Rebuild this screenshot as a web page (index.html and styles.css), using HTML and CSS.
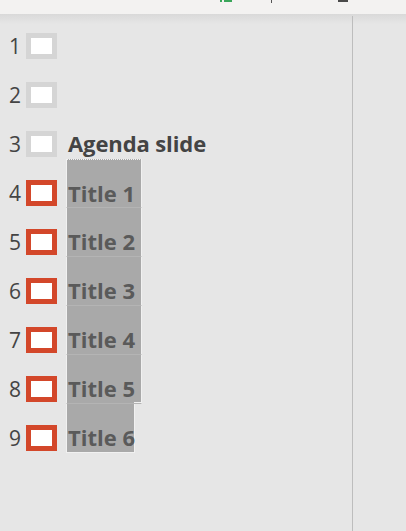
FILE: index.html
```html
<!DOCTYPE html>
<html lang="en">
<head>
    <meta charset="UTF-8">
    <meta name="viewport" content="width=device-width, initial-scale=1.0">
    <title>Slides</title>
    <link rel="stylesheet" href="styles.css">
</head>
<body>
    <div class="ribbon">
        <span class="tick green-a"></span>
        <span class="tick green-b"></span>
        <span class="tick dark-a"></span>
        <span class="tick dark-b"></span>
    </div>
    <div class="workspace">
        <div class="outline">
            <div class="row">
                <span class="num">1</span>
                <span class="thumb"></span>
            </div>
            <div class="row">
                <span class="num">2</span>
                <span class="thumb"></span>
            </div>
            <div class="row">
                <span class="num">3</span>
                <span class="thumb"></span>
                <span class="heading">Agenda slide</span>
            </div>
            <div class="row">
                <span class="num">4</span>
                <span class="thumb hidden"></span>
                <span class="title first">Title 1</span>
            </div>
            <div class="row">
                <span class="num">5</span>
                <span class="thumb hidden"></span>
                <span class="title">Title 2</span>
            </div>
            <div class="row">
                <span class="num">6</span>
                <span class="thumb hidden"></span>
                <span class="title">Title 3</span>
            </div>
            <div class="row">
                <span class="num">7</span>
                <span class="thumb hidden"></span>
                <span class="title">Title 4</span>
            </div>
            <div class="row">
                <span class="num">8</span>
                <span class="thumb hidden"></span>
                <span class="title step">Title 5</span>
            </div>
            <div class="row">
                <span class="num">9</span>
                <span class="thumb hidden"></span>
                <span class="title last">Title 6</span>
            </div>
        </div>
        <div class="notes"></div>
    </div>
</body>
</html>
```

FILE: styles.css
```css
body {
    margin: 0;
    background-color: #e6e6e6;
    color: #444444;
    font-family: "Open Sans", "Noto Sans", sans-serif;
    overflow: hidden;
}

.ribbon {
    height: 14px;
    background-color: #f3f2f1;
    display: flex;
    align-items: flex-start;
}

.tick {
    display: block;
    height: 2px;
}

.green-a { width: 2px; margin-left: 220px; background-color: #3aa65a; }
.green-b { width: 8px; margin-left: 2px; background-color: #3aa65a; }
.dark-a { width: 1px; height: 3px; margin-left: 39px; background-color: #555555; }
.dark-b { width: 10px; margin-left: 66px; background-color: #4a4a4a; }

.workspace {
    display: flex;
    height: 517px;
    background-image: linear-gradient(#d9d9d9, #e6e6e6);
    background-size: 100% 10px;
    background-repeat: no-repeat;
}

.outline {
    width: 353px;
    margin-top: 2px;
    padding-top: 10px;
    border-right: 1px solid #bdbdbd;
    box-sizing: border-box;
}

.notes {
    flex: 1;
}

.row {
    display: flex;
    align-items: flex-start;
    height: 49px;
}

.num {
    width: 21px;
    margin-top: 5px;
    text-align: right;
    font-size: 21px;
    line-height: 30px;
}

.thumb {
    width: 31px;
    height: 26px;
    margin-left: 5px;
    margin-top: 7px;
    border: 5px solid #d5d5d5;
    box-sizing: border-box;
    background-color: #ffffff;
}

.thumb.hidden {
    border-color: #d3472a;
}

.heading {
    margin-left: 11px;
    margin-top: 4px;
    font-size: 22px;
    font-weight: bold;
    line-height: 30px;
    letter-spacing: -0.1px;
}

.title {
    width: 76px;
    height: 49px;
    margin-left: 9px;
    margin-top: -14px;
    padding: 18px 0 0 1px;
    box-sizing: border-box;
    background-color: #a9a9a9;
    border-left: 1px solid #f1f1f1;
    border-right: 1px solid #f1f1f1;
    border-bottom: 1px solid #b4b4b4;
    color: #5a5a5a;
    font-size: 22px;
    font-weight: bold;
    line-height: 30px;
    white-space: nowrap;
}

.title.first {
    border-top: 1px dotted #f1f1f1;
}

.title.step {
    background-image: linear-gradient(#f1f1f1, #f1f1f1);
    background-size: 7px 1px;
    background-position: right bottom;
    background-repeat: no-repeat;
}

.title.last {
    width: 69px;
    border-bottom: 1px solid #f1f1f1;
}
```
